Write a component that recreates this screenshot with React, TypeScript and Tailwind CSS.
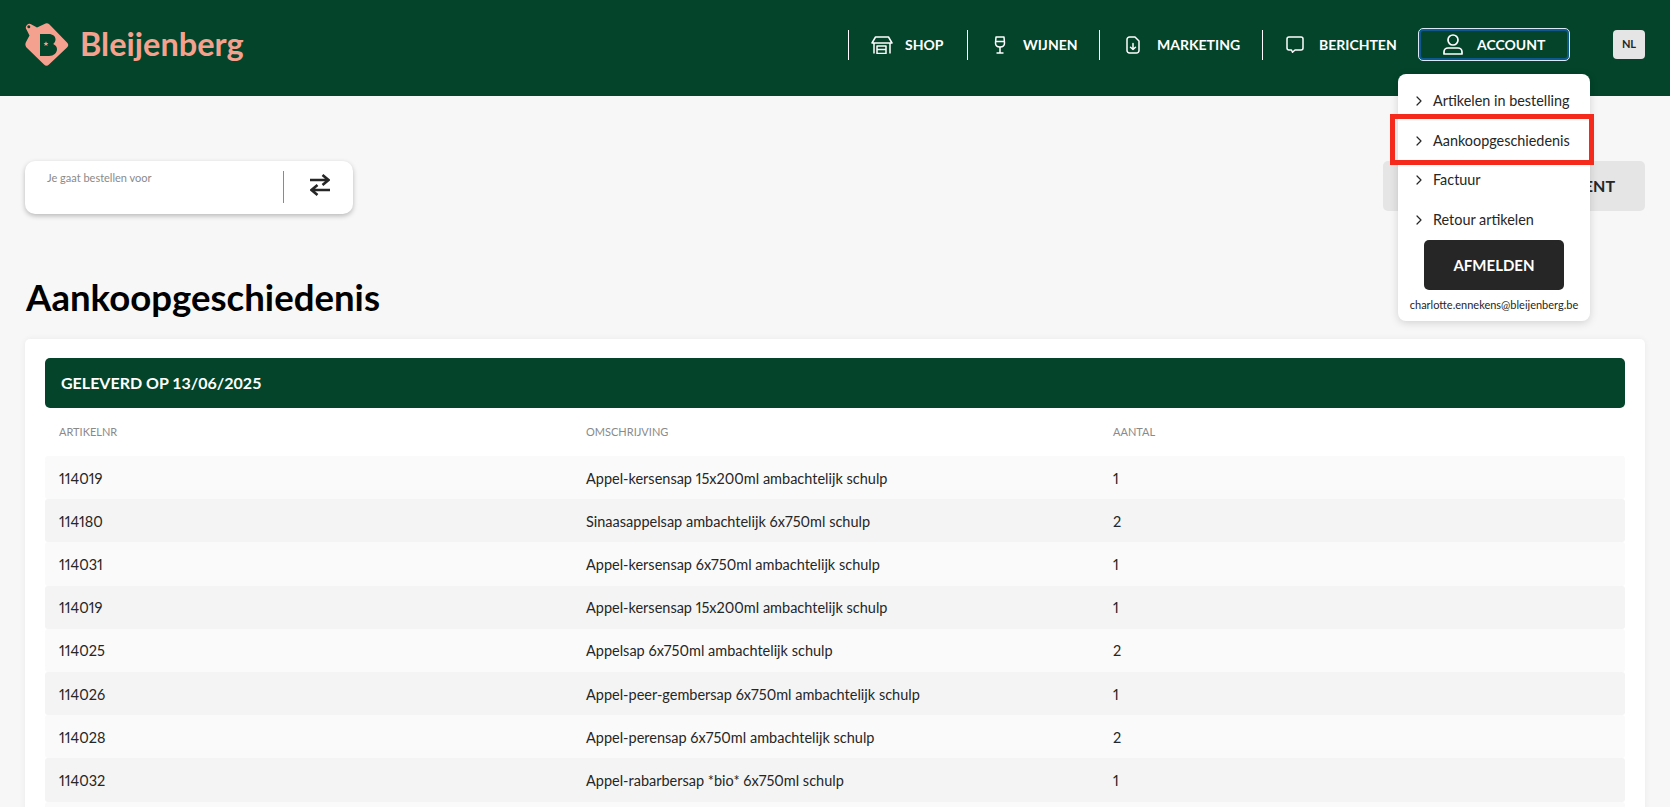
import { ChevronRight } from "lucide-react";

const rows = [
  { nr: "114019", name: "Appel-kersensap 15x200ml ambachtelijk schulp", qty: 1 },
  { nr: "114180", name: "Sinaasappelsap ambachtelijk 6x750ml schulp", qty: 2 },
  { nr: "114031", name: "Appel-kersensap 6x750ml ambachtelijk schulp", qty: 1 },
  { nr: "114019", name: "Appel-kersensap 15x200ml ambachtelijk schulp", qty: 1 },
  { nr: "114025", name: "Appelsap 6x750ml ambachtelijk schulp", qty: 2 },
  { nr: "114026", name: "Appel-peer-gembersap 6x750ml ambachtelijk schulp", qty: 1 },
  { nr: "114028", name: "Appel-perensap 6x750ml ambachtelijk schulp", qty: 2 },
  { nr: "114032", name: "Appel-rabarbersap *bio* 6x750ml schulp", qty: 1 },
];

const menuItems = ["Artikelen in bestelling", "Aankoopgeschiedenis", "Factuur", "Retour artikelen"];

const Logo = () => (
  <svg width="44" height="44" viewBox="0 0 44 44" className="shrink-0">
    {/* board */}
    <path
      d="M19.500 1 Q22 -.5 24.500 1.500 L42 19.500 Q44.500 22 42 24.500 L24 41.500 Q21.500 44 19 41.500 L1.500 24.500 Q-.5 22 1 19 L4.500 12.500 L1.500 6.500 A3.600 3.600 0 0 1 6.500 1.500 L12 4.500z"
      fill="#f4a18f"
    />
    <circle cx="3.800" cy="3.800" r="1.500" fill="#03442a" />
    {/* B */}
    <path d="M15 11h8.500c4.500 0 7 2.300 7 5.500 0 1.900-.9 3.400-2.300 4.400 2.200 1 3.800 2.800 3.800 5.100 0 4-3.300 7-8 7H15z" fill="#03442a" />
    <path d="M21 18.200l.7 1.700 1.800.1-1.400 1.200.5 1.800-1.600-1-1.600 1 .5-1.800-1.400-1.200 1.800-.1z" fill="#f4a18f" />
  </svg>
);

const StoreIcon = () => (
  <svg width="22" height="18" viewBox="0 0 22 18" fill="none" stroke="currentColor" strokeWidth="1.500" strokeLinejoin="round">
    <path d="M4.500 1h13L21 7H1z" />
    <path d="M3 7v10.500M19 7v10.500" />
    <path d="M6 17.500V10h9v7.500zM6 13.500h9" />
  </svg>
);

const WineIcon = () => (
  <svg width="12" height="18" viewBox="0 0 12 18" fill="none" stroke="currentColor" strokeWidth="1.500" strokeLinejoin="round">
    <path d="M2 1h8l.5 6c0 2.500-1.800 4-4.500 4s-4.500-1.500-4.500-4z" />
    <path d="M1.500 5.500h9M6 11v6M2.500 17h7" />
  </svg>
);

const FileIcon = () => (
  <svg width="14" height="18" viewBox="0 0 14 18" fill="none" stroke="currentColor" strokeWidth="1.500" strokeLinejoin="round" strokeLinecap="round">
    <path d="M3.500 1H9l4 4v9.500a2.500 2.500 0 0 1-2.500 2.500h-7A2.500 2.500 0 0 1 1 14.500v-11A2.500 2.500 0 0 1 3.500 1z" />
    <path d="M7 7.500v6M4.500 11.200 7 13.500l2.500-2.300" />
  </svg>
);

const ChatIcon = () => (
  <svg width="18" height="17" viewBox="0 0 18 17" fill="none" stroke="currentColor" strokeWidth="1.500" strokeLinejoin="round">
    <path d="M3 1h12a2 2 0 0 1 2 2v9a2 2 0 0 1-2 2H9l-2.500 2.300L5.500 14H3a2 2 0 0 1-2-2V3a2 2 0 0 1 2-2z" />
  </svg>
);

const UserIcon = () => (
  <svg width="22" height="21" viewBox="0 0 22 21" fill="none" stroke="currentColor" strokeWidth="1.700" strokeLinejoin="round">
    <circle cx="11" cy="6" r="5" />
    <path d="M6 14h10a4 4 0 0 1 4 4v2H2v-2a4 4 0 0 1 4-4z" />
  </svg>
);

const SwapIcon = () => (
  <svg width="20" height="22" viewBox="0 0 20 22" fill="none" stroke="#262626" strokeWidth="2.600">
    <path d="M0 6h18M12.500 1 18.500 6 12.500 11M20 16H2M7.500 11 1.500 16 7.500 21" />
  </svg>
);

const NavLink = ({ icon, label, className }: { icon: React.ReactNode; label: string; className: string }) => (
  <div className={`flex h-[30px] items-center border-l border-white ${className}`}>
    {icon}
    <span className="text-[14px] font-bold">{label}</span>
  </div>
);

const App = () => {
  return (
    <div className="relative h-[807px] overflow-hidden bg-[#f7f7f7] font-['Lato','Liberation_Sans',sans-serif] text-[#262626]">
      <header className="flex h-24 items-center bg-[#03442a] px-[25px] pb-[7px] text-white">
        <div className="flex items-center gap-[11px]">
          <Logo />
          <span className="text-[32.5px] leading-none font-bold text-[#f4a18f]">Bleijenberg</span>
        </div>
        <nav className="ml-auto flex items-center">
          <NavLink icon={<StoreIcon />} label="SHOP" className="w-[119px] gap-[12px] pl-[22px]" />
          <NavLink icon={<WineIcon />} label="WIJNEN" className="w-[132px] gap-[17px] pl-[26px]" />
          <NavLink icon={<FileIcon />} label="MARKETING" className="w-[163px] gap-[17px] pl-[26px]" />
          <NavLink icon={<ChatIcon />} label="BERICHTEN" className="w-[157px] gap-[15px] pl-[23px]" />
          <div className="flex h-[31px] w-[150px] items-center gap-[13px] rounded-[4px] border-2 border-[#0b5a8f] pl-[21px] outline outline-[#dbe9f5]">
            <UserIcon />
            <span className="text-[14px] font-bold">ACCOUNT</span>
          </div>
          <div className="ml-[44px] flex h-[29px] w-[32px] items-center justify-center rounded-[4px] bg-[#e5e5e5] text-[11px] font-bold text-[#262626]">
            NL
          </div>
        </nav>
      </header>

      <main className="px-[25px]">
        <div className="flex items-start justify-between pt-[65px]">
          <div className="flex h-[53px] w-[328px] items-center rounded-[10px] bg-white shadow-[0_2px_5px_rgba(0,0,0,0.25)]">
            <div className="h-full w-[258px] pl-[22px] pt-[9px] text-[11px] text-[#8a8a8a]">Je gaat bestellen voor</div>
            <div className="mb-[2px] h-[32px] border-l border-[#8a8a8a]" />
            <div className="mb-[6px] flex flex-1 justify-center pl-[2px]">
              <SwapIcon />
            </div>
          </div>
          <div className="flex h-[50px] w-[262px] items-center justify-end rounded-[5px] bg-[#e5e5e5] pr-[30px] text-[16px] font-bold">
            ENT
          </div>
        </div>

        <h1 className="mt-[61px] pl-[1px] text-[36.6px] leading-[44px] font-bold text-black">Aankoopgeschiedenis</h1>

        <section className="mt-[20px] rounded-[5px] bg-white px-[20px] pt-[19px] pb-[20px] shadow-[0_0_6px_rgba(0,0,0,0.06)]">
          <div className="flex h-[50px] items-center rounded-[5px] bg-[#03442a] px-[16px] text-[16px] font-bold text-white">
            GELEVERD OP 13/06/2025
          </div>
          <div className="grid h-[48px] grid-cols-[527px_527px_1fr] items-center pl-[14px] text-[11px] text-[#8a8a8a]">
            <span>ARTIKELNR</span>
            <span>OMSCHRIJVING</span>
            <span>AANTAL</span>
          </div>
          {rows.map((row, i) => (
            <div
              key={i}
              className={`grid h-[43.2px] grid-cols-[527px_527px_1fr] items-center rounded-[3px] pl-[14px] pt-[2px] text-[14.5px] proportional-nums ${
                i % 2 === 0 ? "bg-[#fafafa]" : "bg-[#f4f4f4]"
              }`}
            >
              <span>{row.nr}</span>
              <span>{row.name}</span>
              <span>{row.qty}</span>
            </div>
          ))}
          <div className="h-[43.2px] rounded-[3px] bg-[#fafafa]" />
        </section>
      </main>

      {/* account dropdown */}
      <div className="absolute top-[74px] left-[1398px] w-[192px] rounded-[8px] bg-white pt-[7px] shadow-[0_2px_8px_rgba(0,0,0,0.15)]">
        {menuItems.map((item) => (
          <div key={item} className="flex h-[39.7px] items-center pl-[14px] text-[14.4px]">
            <ChevronRight size={16} strokeWidth={1.8} className="mr-[6px] -ml-[1px]" />
            {item}
          </div>
        ))}
        <div className="mx-[26px] flex h-[50px] items-center justify-center rounded-[5px] bg-[#262626] text-[15px] font-bold text-white">
          AFMELDEN
        </div>
        <div className="flex h-[31px] items-center justify-center text-[11px]">charlotte.ennekens@bleijenberg.be</div>
      </div>

      {/* red highlight */}
      <div className="absolute top-[114px] left-[1390px] h-[51px] w-[204px] border-[5px] border-[#f52a1c]" />
    </div>
  );
};

export default App;
